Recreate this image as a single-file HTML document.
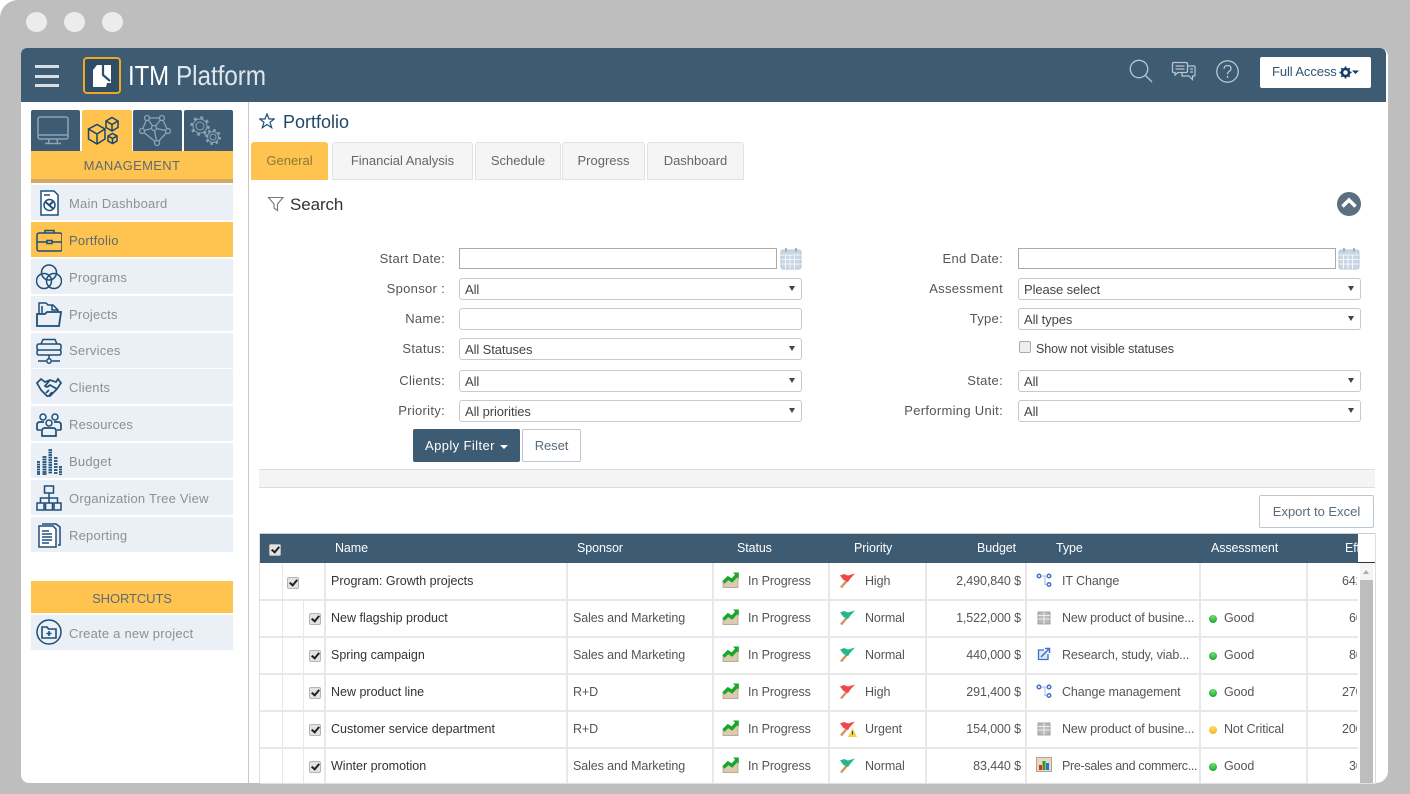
<!DOCTYPE html>
<html lang="en"><head><meta charset="utf-8"><title>ITM Platform</title>
<style>
html,body{margin:0;padding:0;background:#fff}
#p{position:relative;width:1410px;height:794px;overflow:hidden;background:#bebebe;font-family:"Liberation Sans",sans-serif;font-size:12.5px;letter-spacing:-.1px;color:#444}
#p div,#p span,#p svg{position:absolute}
.t{white-space:nowrap;line-height:18px;height:18px}
.s{color:#8b9195;font-size:13px;left:69px;letter-spacing:.22px}
.m{background:#ebeff6;left:31px;width:202px;height:35px}
.ic{fill:none;stroke:#1d4f78;stroke-width:1.5;left:36px;width:26px;height:26px}
.top{background:#3d5b73;top:110px;width:49px;height:41px;border-radius:2px 2px 0 0}
.tab{top:142px;height:36px;background:#f5f5f5;border:1px solid #e2e2e2;border-radius:3px 3px 0 0;line-height:36px;text-align:center;color:#666;font-size:13px;letter-spacing:0}
.o{background:#ffc34f !important}
.l{text-align:right;color:#555;font-size:13px;width:180px;letter-spacing:.3px}
.f{height:20px;border:1px solid #c9c9c9;border-radius:3px;background:#fff;box-sizing:content-box}
.sel{width:341px}
.sel span{left:5px;top:2px;line-height:18px;color:#444;font-size:13px;white-space:nowrap}
.sel i{position:absolute;right:6px;top:7px;width:0;height:0;border-left:3px solid transparent;border-right:3px solid transparent;border-top:5px solid #444}
.h{color:#fff;top:539px;line-height:18px;white-space:nowrap;font-size:12.5px}
.hl{left:260px;width:1098px;height:1px;background:#e8e8e8}
.v{width:1px;background:#e8e8e8;top:563px;height:220px}
.c{white-space:nowrap;line-height:18px;height:18px;color:#333;letter-spacing:0}
.g{color:#555;letter-spacing:-.1px}
.cb{width:10px;height:10px;background:#e3e3e3;border:1px solid #b5b5b5;border-radius:2px}
.cb::after{content:"";position:absolute;left:3px;top:0;width:3px;height:6px;border:solid #222;border-width:0 2px 2px 0;transform:rotate(40deg)}
.d{width:8px;height:8px;border-radius:50%}
.gd{background:radial-gradient(circle at 50% 25%,#6fe06f,#0c9a24)}
.yd{background:radial-gradient(circle at 50% 25%,#ffe06a,#f2a90a)}
</style></head><body><div id="p">
<svg width="0" height="0" style="left:0;top:0"><defs>
<symbol id="tr" viewBox="0 0 17 16"><path d="M1 10 6 7 10 9 16 5V15.500H1Z" fill="#dccbb1" stroke="#a9977c" stroke-width=".7"/><path d="M1.500 10.500 6 6 10 8.500 14.500 3.500" fill="none" stroke="#17a82b" stroke-width="3.400"/><path d="M11 .5H16.800V6.500Z" fill="#17a82b"/></symbol>
<symbol id="fl" viewBox="0 0 17 16"><path d="M2 15.500 8 8.500" stroke="#d9905a" stroke-width="2.400" fill="none"/><path d="M1 3.500 5 2 9 3.500 16 1.500 11 7 9 10 4.500 8Z" fill="currentColor"/></symbol>
<symbol id="flow" viewBox="0 0 16 15"><g fill="#fff" stroke="#3f74c9" stroke-width="1.500"><circle cx="3" cy="3" r="1.800"/><circle cx="13" cy="3" r="1.800"/><circle cx="13" cy="11.500" r="1.800"/></g><path d="M6 3H9V11.500H11" fill="none" stroke="#9db7dd"/></symbol>
<symbol id="db" viewBox="0 0 14 16"><path d="M1 3H13V15H1Z" fill="#b9bdb9" stroke="#8b8f8b" stroke-width=".8"/><path d="M1 6.500H13M1 10H13M7 3V15" stroke="#eee"/></symbol>
<symbol id="lk" viewBox="0 0 14 14"><path d="M7 3H1.500V12.500H11V7" fill="#dfe9fa" stroke="#3e6fc4" stroke-width="1.300"/><path d="M4 10 11.500 2.500M8 1.500H12.500V6" fill="none" stroke="#3e6fc4" stroke-width="1.500"/></symbol>
<symbol id="br" viewBox="0 0 16 15"><path d="M.5 .5H15.500V14.500H.5Z" fill="#e5d9c3" stroke="#b8a688"/><path d="M3 8H6V13H3Z" fill="#e22"/><path d="M6.500 4H9.500V13H6.500Z" fill="#23a32c"/><path d="M10 6H13V13H10Z" fill="#2a6fd2"/></symbol>
</defs></svg>

<!-- window -->
<div style="left:0;top:0;width:18px;height:18px;background:#fff"></div>
<div style="left:0;top:0;width:1410px;height:794px;background:#bebebe;border-radius:18px"></div>
<div style="left:26px;top:12px;width:21px;height:20px;border-radius:50%;background:#ececec"></div>
<div style="left:64px;top:12px;width:21px;height:20px;border-radius:50%;background:#ececec"></div>
<div style="left:102px;top:12px;width:21px;height:20px;border-radius:50%;background:#ececec"></div>
<div style="left:21px;top:48px;width:1367px;height:735px;background:#fff;border-radius:6px 8px 12px 8px"></div>
<div style="left:21px;top:48px;width:1365px;height:54px;background:#3d5b73;border-radius:6px 6px 0 0"></div>

<!-- header -->
<div style="left:35px;top:65px;width:24px;height:3px;background:#d8dfe4"></div>
<div style="left:35px;top:75px;width:24px;height:3px;background:#d8dfe4"></div>
<div style="left:35px;top:84px;width:24px;height:3px;background:#d8dfe4"></div>
<svg style="left:83px;top:57px" width="38" height="37" viewBox="0 0 38 37"><rect x="1" y="1" width="36" height="35" rx="3" fill="#2f4d66" stroke="#efa91f" stroke-width="2"/><path d="M10 13 14 8H28V26L24 26 23 30 10 30Z" fill="#fff"/><path d="M20 7V18L27 24" fill="none" stroke="#2f4d66" stroke-width="2.200"/></svg>
<svg style="left:126px;top:57px" width="145" height="36" viewBox="0 0 145 36"><text x="2" y="28" font-family="Liberation Sans" font-size="28" fill="#fff" textLength="41" lengthAdjust="spacingAndGlyphs">ITM</text><text x="50" y="28" font-family="Liberation Sans" font-size="28" fill="#dfe5ea" textLength="90" lengthAdjust="spacingAndGlyphs">Platform</text></svg>
<svg style="left:1128px;top:58px" width="26" height="26" viewBox="0 0 26 26" fill="none" stroke="#b9c6d0" stroke-width="1.300"><circle cx="11" cy="11" r="8.700"/><path d="M17.500 17.500 24 24"/></svg>
<svg style="left:1171px;top:61px" width="26" height="22" viewBox="0 0 26 22" fill="none" stroke="#b9c6d0" stroke-width="1.300"><path d="M2.500 1.500H15Q16.500 1.500 16.500 3V10Q16.500 11.500 15 11.500H7L4 14V11.500H2.500Q1.500 11.500 1.500 10V3Q1.500 1.500 2.500 1.500ZM4.500 5H13.500M4.500 8H13.500"/><path d="M17 5H23Q24 5 24 6V14Q24 15 23 15H21.500V18.500L18 15H11V12M19 8H22M19 11H22" stroke-width="1.200"/></svg>
<svg style="left:1215px;top:59px" width="25" height="25" viewBox="0 0 25 25" fill="none" stroke="#b9c6d0" stroke-width="1.300"><circle cx="12.500" cy="12.500" r="10.700"/><path d="M9 9.800Q9.300 6.500 12.500 6.500 16 6.500 16 9.500 16 11.300 14 12.500 12.500 13.500 12.500 15.500M12.500 17V19"/></svg>
<div style="left:1260px;top:57px;width:111px;height:31px;background:#fff;border-radius:2px"></div>
<div class="t" style="left:1272px;top:63px;color:#2f5674;font-size:13px">Full Access</div>
<svg style="left:1339px;top:66px" width="21" height="13" viewBox="0 0 21 13"><circle cx="6.500" cy="6.500" r="3.500" fill="none" stroke="#123a66" stroke-width="2.500"/><path d="M6.500 .5V3M6.500 10V12.500M.5 6.500H3M10 6.500H12.500M2.300 2.300 4 4M9 9 10.700 10.700M2.300 10.700 4 9M9 4 10.700 2.300" stroke="#123a66" stroke-width="1.800"/><path d="M13 4.500H20L16.500 8Z" fill="#123a66"/></svg>

<!-- sidebar -->
<div style="left:248px;top:102px;width:1px;height:681px;background:#c8c8c8"></div>
<div class="top" style="left:31px"></div>
<div class="top o" style="left:82px;height:45px;width:50px"></div>
<div class="top" style="left:133px"></div>
<div class="top" style="left:184px"></div>
<svg style="left:37px;top:116px" width="33" height="30" viewBox="0 0 33 30" fill="none" stroke="#8ea3b3" stroke-width="1.500"><rect x="1" y="1" width="30" height="22" rx="2"/><path d="M1 19H31M12 23 11.500 27M20 23 20.500 27M8 27.500H24"/></svg>
<svg style="left:87px;top:115px" width="33" height="31" viewBox="0 0 33 31" fill="none" stroke="#17466f" stroke-width="1.500"><path d="M1.500 14 10 9.500 18 14V24L10 29 1.500 24ZM1.500 14 10 19 18 14M10 19V29"/><path d="M19 6 25 2.500 31 6V12.500L25 16 19 12.500ZM19 6 25 9.500 31 6M25 9.500V16"/><path d="M21 21 25.500 18.500 30 21V26L25.500 28.500 21 26ZM21 21 25.500 23.500 30 21M25.500 23.500V28.500"/></svg>
<svg style="left:139px;top:114px" width="32" height="33" viewBox="0 0 32 33" fill="none" stroke="#8ea3b3" stroke-width="1.300"><path d="M8 4 23 4 29 17 18 29 3 17ZM8 4 15 14 23 4M3 17 15 14 29 17M15 14 18 29"/><g fill="#3d5b73"><circle cx="8" cy="4" r="2.500"/><circle cx="23" cy="4" r="2.500"/><circle cx="29" cy="17" r="2.500"/><circle cx="18" cy="29" r="2.500"/><circle cx="3" cy="17" r="2.500"/><circle cx="15" cy="14" r="2.500"/></g></svg>
<svg style="left:189px;top:116px" width="33" height="30" viewBox="0 0 33 30" fill="none" stroke="#8ea3b3"><circle cx="11" cy="10" r="4"/><circle cx="11" cy="10" r="7"/><circle cx="11" cy="10" r="8.500" stroke-width="2.500" stroke-dasharray="2.800 3.880"/><circle cx="24" cy="21" r="3"/><circle cx="24" cy="21" r="5.500"/><circle cx="24" cy="21" r="7" stroke-width="2" stroke-dasharray="2.500 3"/></svg>
<div class="o" style="left:31px;top:151px;width:202px;height:28px"></div>
<div style="left:31px;top:179px;width:202px;height:4px;background:#d0a964"></div>
<div class="t" style="left:31px;top:157px;width:202px;text-align:center;color:#5d6a74;font-size:13px;letter-spacing:.35px">MANAGEMENT</div>

<div class="m" style="top:185px"></div><div class="m o" style="top:222px"></div><div class="m" style="top:259px"></div><div class="m" style="top:296px"></div><div class="m" style="top:333px"></div><div class="m" style="top:369px"></div><div class="m" style="top:406px"></div><div class="m" style="top:443px"></div><div class="m" style="top:480px"></div><div class="m" style="top:517px"></div>
<div class="t s" style="top:195px">Main Dashboard</div>
<div class="t s" style="top:232px;color:#5d6a74">Portfolio</div>
<div class="t s" style="top:269px">Programs</div>
<div class="t s" style="top:306px">Projects</div>
<div class="t s" style="top:342px">Services</div>
<div class="t s" style="top:379px">Clients</div>
<div class="t s" style="top:416px">Resources</div>
<div class="t s" style="top:453px">Budget</div>
<div class="t s" style="top:490px">Organization Tree View</div>
<div class="t s" style="top:527px">Reporting</div>
<svg class="ic" style="top:190px" viewBox="0 0 26 26"><path d="M5 1H18L22 5V25H5Z" fill="#fff"/><path d="M8 5H14"/><circle cx="13.500" cy="15" r="5.500"/><path d="M9.500 12 17 18.500M13.500 15 17 11.500" stroke-width="2"/></svg>
<svg class="ic" style="top:227px" viewBox="0 0 26 26"><rect x="1" y="6" width="25" height="18" rx="2"/><path d="M9 6V3.500H18V6M1 15H11M16 15H26"/><rect x="11" y="13.500" width="5" height="3"/></svg>
<svg class="ic" style="top:264px" viewBox="0 0 26 26"><circle cx="13" cy="8.500" r="7.500"/><circle cx="8" cy="17" r="7.500"/><circle cx="18" cy="17" r="7.500"/></svg>
<svg class="ic" style="top:301px" viewBox="0 0 26 26"><path d="M3 22V2H10L12 4H17L22 9V12"/><path d="M6 12V5M16 4V9H22"/><path d="M1 25V13H9L11 11H25L23 25Z" fill="#ebeff6" stroke-width="1.800"/></svg>
<svg class="ic" style="top:338px" viewBox="0 0 26 26"><path d="M5 6 7 1.500H19L21 6M1 8Q1 6 3 6H23Q25 6 25 8V10Q25 12 23 12H3Q1 12 1 10ZM1 14Q1 12 3 12H23Q25 12 25 14V15Q25 17 23 17H3Q1 17 1 15ZM13 17V21M2 23H10M16 23H24"/><circle cx="13" cy="23" r="2.200"/></svg>
<svg class="ic" style="top:375px" viewBox="0 0 26 26"><path d="M1 8 5 4 9 7 14 5 20 7 22 4 25 8 21 14 14 21 11 21 5 15ZM14 5 9 11Q11 13 14 10L21 14M10 18 13 15M13 21 16 17" stroke-width="1.700"/></svg>
<svg class="ic" style="top:412px" viewBox="0 0 26 26"><circle cx="7" cy="5" r="3"/><circle cx="19" cy="5" r="3"/><circle cx="13" cy="11" r="3"/><path d="M1 18V13Q1 10 4 10H8M25 18V13Q25 10 22 10H18M6 24V19Q6 16 9 16H17Q20 16 20 19V24Z" stroke-width="1.700"/><path d="M1 18H5M21 18H25"/></svg>
<svg class="ic" style="top:449px;stroke-width:1.800" viewBox="0 0 26 26"><path d="M1 13H4M1 15.500H4M1 18H4M1 20.500H4M1 23H4M1 25H4M6.500 8H10.500M6.500 10.500H10.500M6.500 13H10.500M6.500 15.500H10.500M6.500 18H10.500M6.500 20.500H10.500M6.500 23H10.500M6.500 25H10.500M12.500 1H16M12.500 3.500H16M12.500 6H16M12.500 8.500H16M12.500 11H16M12.500 13.500H16M12.500 16H16M12.500 18.500H16M12.500 21H16M12.500 23.500H16M18 9H21.500M18 12H21.500M18 15H21.500M18 18H21.500M18 21H21.500M18 24H21.500M23 18H26M23 20.500H26M23 23H26M23 25.500H26"/></svg>
<svg class="ic" style="top:485px" viewBox="0 0 26 26"><rect x="8.500" y="1" width="9" height="7"/><rect x="1" y="18" width="7" height="7"/><rect x="9.500" y="18" width="7" height="7"/><rect x="18" y="18" width="7" height="7"/><path d="M13 8V18M4.500 18V13H21.500V18"/></svg>
<svg class="ic" style="top:522px" viewBox="0 0 26 26"><path d="M3 4H17L20 7V25H3Z" fill="#fff"/><path d="M6 9H13M6 12H16M6 15H16M6 18H16M6 21H13" stroke-width="1.400"/><path d="M6 2H20L24 5V23H22"/></svg>
<div class="o" style="left:31px;top:581px;width:202px;height:32px"></div>
<div class="t" style="left:31px;top:590px;width:202px;text-align:center;color:#5d6a74;font-size:13px">SHORTCUTS</div>
<div class="m" style="top:615px"></div>
<div class="t s" style="top:625px">Create a new project</div>
<svg class="ic" style="top:619px" viewBox="0 0 26 26"><circle cx="13" cy="13" r="12"/><path d="M6 19V8H11L12.500 10H20V19ZM13 12V17M10.500 14.500H15.500" stroke-width="1.600"/></svg>

<!-- title + tabs -->
<svg style="left:259px;top:113px" width="16" height="16" viewBox="0 0 16 16"><path d="M8 1 10 6H15.200L11 9.300 12.700 14.700 8 11.500 3.300 14.700 5 9.300 .8 6H6Z" fill="#fff" stroke="#1f4b78" stroke-width="1.200"/></svg>
<div class="t" style="left:283px;top:113px;color:#1f4766;font-size:18px;letter-spacing:0">Portfolio</div>
<div class="tab o" style="left:251px;width:77px;height:38px;border:0;line-height:38px;color:#8a7a35;border-radius:3px 3px 0 0">General</div>
<div class="tab" style="left:332px;width:139px">Financial Analysis</div>
<div class="tab" style="left:475px;width:84px">Schedule</div>
<div class="tab" style="left:562px;width:81px">Progress</div>
<div class="tab" style="left:647px;width:95px">Dashboard</div>
<svg style="left:267px;top:196px" width="18" height="16" viewBox="0 0 18 16" fill="none" stroke="#777" stroke-width="1.100"><path d="M1.500 1.500H16L10.500 8V14.500L7 12V8Z"/></svg>
<div class="t" style="left:290px;top:196px;color:#333;font-size:17px">Search</div>
<svg style="left:1337px;top:192px" width="24" height="24" viewBox="0 0 24 24"><circle cx="12" cy="12" r="12" fill="#5a7082"/><path d="M5.500 14.500 12 8 18.500 14.500" fill="none" stroke="#fff" stroke-width="3.500"/></svg>

<!-- form -->
<div class="t l" style="left:265px;top:250px">Start Date:</div>
<div class="t l" style="left:265px;top:280px">Sponsor :</div>
<div class="t l" style="left:265px;top:310px">Name:</div>
<div class="t l" style="left:265px;top:340px">Status:</div>
<div class="t l" style="left:265px;top:372px">Clients:</div>
<div class="t l" style="left:265px;top:402px">Priority:</div>
<div class="t l" style="left:823px;top:250px">End Date:</div>
<div class="t l" style="left:823px;top:280px">Assessment</div>
<div class="t l" style="left:823px;top:310px">Type:</div>
<div class="t l" style="left:823px;top:372px">State:</div>
<div class="t l" style="left:823px;top:402px">Performing Unit:</div>
<div class="f" style="left:459px;top:248px;width:316px;height:19px;border-color:#aaa;border-radius:0"></div>
<div class="f" style="left:1018px;top:248px;width:316px;height:19px;border-color:#aaa;border-radius:0"></div>
<svg style="left:780px;top:247px" width="22" height="23" viewBox="0 0 22 23"><rect x="1" y="3" width="20" height="19" rx="2" fill="#c8d7e3" stroke="#b4c6d5"/><path d="M1 8H21M5.500 8V22M10 8V22M14.500 8V22M1 12.500H21M1 17H21" stroke="#fff" fill="none" stroke-width=".8"/><path d="M6 1V5M16 1V5" stroke="#9fb5c8" stroke-width="2"/></svg>
<svg style="left:1338px;top:247px" width="22" height="23" viewBox="0 0 22 23"><rect x="1" y="3" width="20" height="19" rx="2" fill="#c8d7e3" stroke="#b4c6d5"/><path d="M1 8H21M5.500 8V22M10 8V22M14.500 8V22M1 12.500H21M1 17H21" stroke="#fff" fill="none" stroke-width=".8"/><path d="M6 1V5M16 1V5" stroke="#9fb5c8" stroke-width="2"/></svg>
<div class="f sel" style="left:459px;top:278px"><span>All</span><i></i></div>
<div class="f" style="left:459px;top:308px;width:341px"></div>
<div class="f sel" style="left:459px;top:338px"><span>All Statuses</span><i></i></div>
<div class="f sel" style="left:459px;top:370px"><span>All</span><i></i></div>
<div class="f sel" style="left:459px;top:400px"><span>All priorities</span><i></i></div>
<div class="f sel" style="left:1018px;top:278px"><span>Please select</span><i></i></div>
<div class="f sel" style="left:1018px;top:308px"><span>All types</span><i></i></div>
<div style="left:1019px;top:341px;width:10px;height:10px;background:#eee;border:1px solid #aaa;border-radius:2px"></div>
<div class="t" style="left:1036px;top:340px;color:#444">Show not visible statuses</div>
<div class="f sel" style="left:1018px;top:370px"><span>All</span><i></i></div>
<div class="f sel" style="left:1018px;top:400px"><span>All</span><i></i></div>
<div style="left:413px;top:429px;width:107px;height:33px;background:#3d5b73;border-radius:2px"></div>
<div class="t" style="left:425px;top:437px;color:#fff;font-size:13px;letter-spacing:.4px">Apply Filter</div>
<div style="left:500px;top:445px;width:0;height:0;border-left:4px solid transparent;border-right:4px solid transparent;border-top:4px solid #fff"></div>
<div style="left:522px;top:429px;width:57px;height:31px;background:#fff;border:1px solid #bcc7d6;border-radius:2px;text-align:center;line-height:31px;color:#5b6b78;font-size:13px">Reset</div>
<div style="left:259px;top:469px;width:1116px;height:17px;background:#f4f4f4;border-top:1px solid #ddd;border-bottom:1px solid #ddd"></div>
<div style="left:1259px;top:495px;width:113px;height:31px;background:#fff;border:1px solid #bcc7d6;border-radius:2px;text-align:center;line-height:31px;color:#5b6b78;font-size:13px;letter-spacing:0">Export to Excel</div>

<!-- table -->
<div style="left:259px;top:533px;width:1116px;height:1px;background:#ccc"></div>
<div style="left:259px;top:533px;width:1px;height:250px;background:#ddd"></div>
<div style="left:1375px;top:533px;width:1px;height:250px;background:#ddd"></div>
<div style="left:260px;top:534px;width:1098px;height:29px;background:#3d5b73"></div>
<div style="left:1358px;top:562px;width:17px;height:1px;background:#333"></div>
<div class="cb" style="left:269px;top:544px"></div>
<div class="h" style="left:335px">Name</div>
<div class="h" style="left:577px">Sponsor</div>
<div class="h" style="left:737px">Status</div>
<div class="h" style="left:854px">Priority</div>
<div class="h" style="left:977px">Budget</div>
<div class="h" style="left:1056px">Type</div>
<div class="h" style="left:1211px">Assessment</div>
<div class="h" style="left:1345px;width:13px;overflow:hidden">Effort</div>

<div class="hl" style="top:599px;height:2px"></div><div class="hl" style="top:636px;height:2px"></div><div class="hl" style="top:673px;height:2px"></div><div class="hl" style="top:710px;height:2px"></div><div class="hl" style="top:747px;height:2px"></div>
<div class="v" style="left:282px"></div><div class="v" style="left:303px;top:600px;height:183px"></div><div class="v" style="left:324px;width:2px"></div><div class="v" style="left:566px;width:2px"></div><div class="v" style="left:712px;width:2px"></div><div class="v" style="left:828px;width:2px"></div><div class="v" style="left:925px;width:2px"></div><div class="v" style="left:1025px;width:2px"></div><div class="v" style="left:1199px;width:2px"></div><div class="v" style="left:1306px;width:2px"></div>
<div style="left:260px;top:783px;width:1116px;height:1px;background:#e0e0e0"></div>

<div class="cb" style="left:287px;top:577px"></div><div class="cb" style="left:309px;top:613px"></div><div class="cb" style="left:309px;top:650px"></div><div class="cb" style="left:309px;top:687px"></div><div class="cb" style="left:309px;top:724px"></div><div class="cb" style="left:309px;top:761px"></div>

<div class="c" style="left:331px;top:572px">Program: Growth projects</div>
<div class="c" style="left:331px;top:609px">New flagship product</div>
<div class="c" style="left:331px;top:646px">Spring campaign</div>
<div class="c" style="left:331px;top:683px">New product line</div>
<div class="c" style="left:331px;top:720px">Customer service department</div>
<div class="c" style="left:331px;top:757px">Winter promotion</div>
<div class="c g" style="left:573px;top:609px">Sales and Marketing</div>
<div class="c g" style="left:573px;top:646px">Sales and Marketing</div>
<div class="c g" style="left:573px;top:683px">R+D</div>
<div class="c g" style="left:573px;top:720px">R+D</div>
<div class="c g" style="left:573px;top:757px">Sales and Marketing</div>

<svg style="left:722px;top:572px" width="17" height="16"><use href="#tr"/></svg><svg style="left:722px;top:609px" width="17" height="16"><use href="#tr"/></svg><svg style="left:722px;top:646px" width="17" height="16"><use href="#tr"/></svg><svg style="left:722px;top:683px" width="17" height="16"><use href="#tr"/></svg><svg style="left:722px;top:720px" width="17" height="16"><use href="#tr"/></svg><svg style="left:722px;top:757px" width="17" height="16"><use href="#tr"/></svg>
<div class="c g" style="left:748px;top:572px">In Progress</div><div class="c g" style="left:748px;top:609px">In Progress</div><div class="c g" style="left:748px;top:646px">In Progress</div><div class="c g" style="left:748px;top:683px">In Progress</div><div class="c g" style="left:748px;top:720px">In Progress</div><div class="c g" style="left:748px;top:757px">In Progress</div>

<svg style="left:839px;top:572px;color:#f0474a" width="17" height="16"><use href="#fl"/></svg>
<svg style="left:839px;top:609px;color:#22b88a" width="17" height="16"><use href="#fl"/></svg>
<svg style="left:839px;top:646px;color:#22b88a" width="17" height="16"><use href="#fl"/></svg>
<svg style="left:839px;top:683px;color:#f0474a" width="17" height="16"><use href="#fl"/></svg>
<svg style="left:839px;top:720px;color:#f0474a" width="17" height="16"><use href="#fl"/></svg>
<svg style="left:848px;top:728px" width="9" height="9" viewBox="0 0 9 9"><path d="M4.500 0 9 9H0Z" fill="#f3d23a"/><path d="M4.500 3V6.500" stroke="#333"/></svg>
<svg style="left:839px;top:757px;color:#22b88a" width="17" height="16"><use href="#fl"/></svg>
<div class="c g" style="left:865px;top:572px">High</div><div class="c g" style="left:865px;top:609px">Normal</div><div class="c g" style="left:865px;top:646px">Normal</div><div class="c g" style="left:865px;top:683px">High</div><div class="c g" style="left:865px;top:720px">Urgent</div><div class="c g" style="left:865px;top:757px">Normal</div>

<div class="c g" style="left:921px;width:100px;text-align:right;top:572px">2,490,840 $</div>
<div class="c g" style="left:921px;width:100px;text-align:right;top:609px">1,522,000 $</div>
<div class="c g" style="left:921px;width:100px;text-align:right;top:646px">440,000 $</div>
<div class="c g" style="left:921px;width:100px;text-align:right;top:683px">291,400 $</div>
<div class="c g" style="left:921px;width:100px;text-align:right;top:720px">154,000 $</div>
<div class="c g" style="left:921px;width:100px;text-align:right;top:757px">83,440 $</div>

<svg style="left:1036px;top:573px" width="16" height="15"><use href="#flow"/></svg>
<svg style="left:1037px;top:609px" width="14" height="16"><use href="#db"/></svg>
<svg style="left:1037px;top:647px" width="14" height="14"><use href="#lk"/></svg>
<svg style="left:1036px;top:684px" width="16" height="15"><use href="#flow"/></svg>
<svg style="left:1037px;top:720px" width="14" height="16"><use href="#db"/></svg>
<svg style="left:1036px;top:757px" width="16" height="15"><use href="#br"/></svg>
<div class="c g" style="left:1062px;top:572px">IT Change</div>
<div class="c g" style="left:1062px;top:609px">New product of busine...</div>
<div class="c g" style="left:1062px;top:646px">Research, study, viab...</div>
<div class="c g" style="left:1062px;top:683px">Change management</div>
<div class="c g" style="left:1062px;top:720px">New product of busine...</div>
<div class="c g" style="left:1062px;top:757px;letter-spacing:-.3px">Pre-sales and commerc...</div>

<div class="d gd" style="left:1209px;top:615px"></div><div class="d gd" style="left:1209px;top:652px"></div><div class="d gd" style="left:1209px;top:689px"></div><div class="d yd" style="left:1209px;top:726px"></div><div class="d gd" style="left:1209px;top:763px"></div>
<div class="c g" style="left:1224px;top:609px">Good</div><div class="c g" style="left:1224px;top:646px">Good</div><div class="c g" style="left:1224px;top:683px">Good</div><div class="c g" style="left:1224px;top:720px">Not Critical</div><div class="c g" style="left:1224px;top:757px">Good</div>

<div class="c g" style="left:1342px;top:572px;width:15px;overflow:hidden">642</div>
<div class="c g" style="left:1349px;top:609px;width:8px;overflow:hidden">60</div>
<div class="c g" style="left:1349px;top:646px;width:8px;overflow:hidden">80</div>
<div class="c g" style="left:1342px;top:683px;width:15px;overflow:hidden">270</div>
<div class="c g" style="left:1342px;top:720px;width:15px;overflow:hidden">200</div>
<div class="c g" style="left:1349px;top:757px;width:8px;overflow:hidden">30</div>

<div style="left:1360px;top:563px;width:13px;height:220px;background:#f4f4f4"></div>
<div style="left:1360px;top:580px;width:13px;height:203px;background:#bdbdbd"></div>
<div style="left:1363px;top:570px;width:0;height:0;border-left:3.500px solid transparent;border-right:3.500px solid transparent;border-bottom:4px solid #aaa"></div>
</div></body></html>
